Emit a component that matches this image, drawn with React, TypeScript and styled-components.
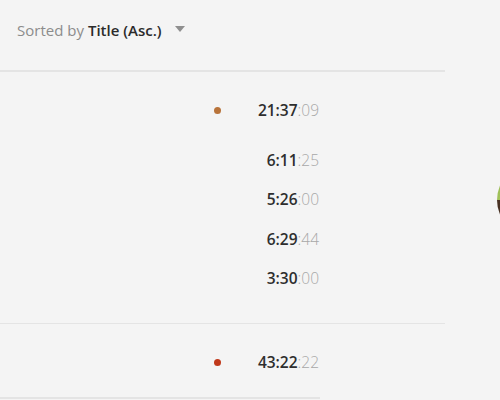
import styled, { createGlobalStyle } from "styled-components";

const GlobalStyle = createGlobalStyle`
  html, body {
    margin: 0;
    padding: 0;
    background: #f4f4f4;
    overflow: hidden;
    font-family: "Open Sans", "Noto Sans", sans-serif;
  }
`;

const Page = styled.div`
  display: flex;
  align-items: flex-start;
  width: 500px;
  height: 400px;
  overflow: hidden;
`;

const Main = styled.div`
  width: 445px;
  flex-shrink: 0;
`;

const SortBar = styled.div`
  height: 70px;
  box-sizing: border-box;
  padding: 0 0 10px 17px;
  display: flex;
  align-items: center;
  font-size: 15px;
  color: #8c8c8c;
`;

const SortValue = styled.span`
  color: #2b2b2b;
  font-weight: 600;
  margin-left: 4px;
`;

const Caret = styled.span`
  width: 0;
  height: 0;
  margin-left: 13px;
  margin-top: -3px;
  border-left: 5px solid transparent;
  border-right: 5px solid transparent;
  border-top: 6px solid #8f8f8f;
`;

const List = styled.div`
  border-top: 2px solid #e4e4e4;
`;

const Section = styled.div<{ $last?: boolean }>`
  padding-bottom: ${({ $last }) => ($last ? "0" : "25px")};
  border-bottom: ${({ $last }) => ($last ? "none" : "1px solid #e4e4e4")};
`;

const HeaderRow = styled.div`
  width: 320px;
  height: 40px;
  margin-top: 18px;
  display: flex;
  align-items: center;
  justify-content: flex-end;
`;

const Dot = styled.span<{ $color: string }>`
  width: 7px;
  height: 7px;
  border-radius: 50%;
  background: ${({ $color }) => $color};
  margin-right: 37px;
`;

const Tracks = styled.div<{ $bordered?: boolean }>`
  width: 320px;
  margin-top: ${({ $bordered }) => ($bordered ? "15px" : "10px")};
  border-top: ${({ $bordered }) => ($bordered ? "2px solid #e4e4e4" : "none")};
`;

const TrackRow = styled.div`
  height: 39.5px;
  display: flex;
  align-items: center;
  justify-content: flex-end;
`;

const Time = styled.span`
  font-size: 15.5px;
  color: #2e2e2e;
  font-weight: 600;
  padding-right: 1px;
`;

const Seconds = styled.span`
  font-weight: 300;
  color: #a8a8a8;
`;

const ArtColumn = styled.div`
  margin-left: 52px;
  margin-top: 164px;
  flex-shrink: 0;
`;

const Art = styled.div`
  width: 72px;
  height: 72px;
  border-radius: 50%;
  background: linear-gradient(to bottom, #8fb54a 0%, #a2c25a 50%, #4a3324 50%, #3a281c 100%);
`;

const Duration = ({ value }: { value: string }) => {
  const parts = value.split(":");
  const sec = parts.pop();
  return (
    <Time>
      {parts.join(":")}
      <Seconds>:{sec}</Seconds>
    </Time>
  );
};

const sections = [
  {
    color: "#b8733a",
    total: "21:37:09",
    tracks: ["6:11:25", "5:26:00", "6:29:44", "3:30:00"],
  },
  {
    color: "#c0391b",
    total: "43:22:22",
    tracks: [],
  },
];

const App = () => {
  return (
    <>
      <GlobalStyle />
      <Page>
        <Main>
          <SortBar>
            Sorted by<SortValue>Title (Asc.)</SortValue>
            <Caret />
          </SortBar>
          <List>
            {sections.map((s, i) => {
              const last = i === sections.length - 1;
              return (
                <Section key={i} $last={last}>
                  <HeaderRow>
                    <Dot $color={s.color} />
                    <Duration value={s.total} />
                  </HeaderRow>
                  <Tracks $bordered={last}>
                    {s.tracks.map((t, j) => (
                      <TrackRow key={j}>
                        <Duration value={t} />
                      </TrackRow>
                    ))}
                  </Tracks>
                </Section>
              );
            })}
          </List>
        </Main>
        <ArtColumn>
          <Art />
        </ArtColumn>
      </Page>
    </>
  );
};

export default App;
